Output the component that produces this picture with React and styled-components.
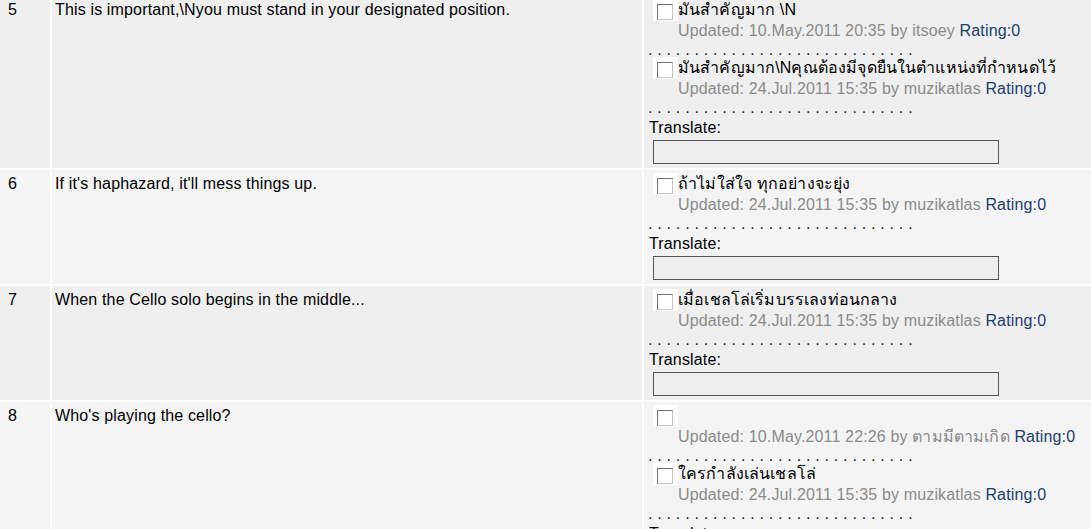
import React from "react"
import styled, { createGlobalStyle } from "styled-components"

const GlobalStyle = createGlobalStyle`
  body {
    margin: 0;
    background: #ffffff;
    font-family: "Liberation Sans", "Noto Sans", "DejaVu Sans", sans-serif;
    font-size: 16px;
    letter-spacing: 0.15px;
    color: #000;
    overflow: hidden;
  }
`

const rows = [
  {
    num: 5,
    en: "This is important,\\Nyou must stand in your designated position.",
    items: [
      { th: "มันสำคัญมาก \\N", date: "10.May.2011 20:35", by: "itsoey" },
      {
        th: "มันสำคัญมาก\\Nคุณต้องมีจุดยืนในตำแหน่งที่กำหนดไว้",
        date: "24.Jul.2011 15:35",
        by: "muzikatlas",
      },
    ],
  },
  {
    num: 6,
    en: "If it's haphazard, it'll mess things up.",
    items: [
      { th: "ถ้าไม่ใส่ใจ ทุกอย่างจะยุ่ง", date: "24.Jul.2011 15:35", by: "muzikatlas" },
    ],
  },
  {
    num: 7,
    en: "When the Cello solo begins in the middle...",
    items: [
      { th: "เมื่อเชลโล่เริ่มบรรเลงท่อนกลาง", date: "24.Jul.2011 15:35", by: "muzikatlas" },
    ],
  },
  {
    num: 8,
    en: "Who's playing the cello?",
    items: [
      { th: "", date: "10.May.2011 22:26", by: "ตามมีตามเกิด" },
      { th: "ใครกำลังเล่นเชลโล่", date: "24.Jul.2011 15:35", by: "muzikatlas" },
    ],
  },
]

const dots = ". ".repeat(29)

const App = () => {
  return (
    <>
      <GlobalStyle />
      <Grid>
        {rows.map((row, i) => (
          <React.Fragment key={row.num}>
            <NumCell $alt={i % 2 === 1}>{row.num}</NumCell>
            <TextCell $alt={i % 2 === 1}>{row.en}</TextCell>
            <TransCell $alt={i % 2 === 1}>
              {row.items.map((item, j) => (
                <div key={j}>
                  <ItemLine>
                    <BoxWrap>
                      <Box type="checkbox" />
                    </BoxWrap>
                    <span>{item.th}</span>
                  </ItemLine>
                  <Meta>
                    Updated: {item.date} by {item.by} <Rating>Rating:0</Rating>
                  </Meta>
                  <Dots>{dots}</Dots>
                </div>
              ))}
              <Label>Translate:</Label>
              <Field type="text" />
            </TransCell>
          </React.Fragment>
        ))}
      </Grid>
    </>
  )
}

const Grid = styled.div`
  display: grid;
  grid-template-columns: 50px 590px 1fr;
  gap: 2px;
  margin-top: -4px;
  background: #ffffff;
  line-height: 20px;
`

const Cell = styled.div`
  background: ${props => (props.$alt ? "#f4f4f4" : "#efefef")};
`

const NumCell = styled(Cell)`
  padding: 4px 0 0 8px;
`

const TextCell = styled(Cell)`
  padding: 4px 0 0 3px;
`

const TransCell = styled(Cell)`
  padding: 3px 4px 4px 4px;
`

const ItemLine = styled.div`
  display: flex;
  align-items: center;
  height: 22px;
`

const BoxWrap = styled.span`
  display: flex;
  align-items: flex-start;
  width: 25px;
  height: 22px;
  padding: 5px 0 0 4px;
  margin-left: 5px;
  box-sizing: border-box;
  background: #ffffff;
`

const Box = styled.input`
  appearance: none;
  margin: 0;
  width: 16px;
  height: 16px;
  box-sizing: border-box;
  border: 1px solid;
  border-color: #6f6f6f #c4c4c4 #c4c4c4 #6f6f6f;
  background: #ffffff;
`

const Meta = styled.div`
  padding-left: 30px;
  color: #8a8a8a;
  height: 20px;
  white-space: nowrap;
`

const Rating = styled.span`
  color: #1d3c6e;
`

const Dots = styled.div`
  height: 16px;
  padding-top: 3px;
  box-sizing: border-box;
  line-height: 12px;
  color: #222;
  white-space: pre;
  letter-spacing: 0.2px;
`

const Label = styled.div`
  height: 20px;
  margin-top: 3px;
  padding-left: 1px;
`

const Field = styled.input`
  display: block;
  margin: 2px 0 0 5px;
  width: 346px;
  height: 24px;
  box-sizing: border-box;
  border: 1px solid #555;
  background: #eeeeee;
  padding: 0;
`

export default App
